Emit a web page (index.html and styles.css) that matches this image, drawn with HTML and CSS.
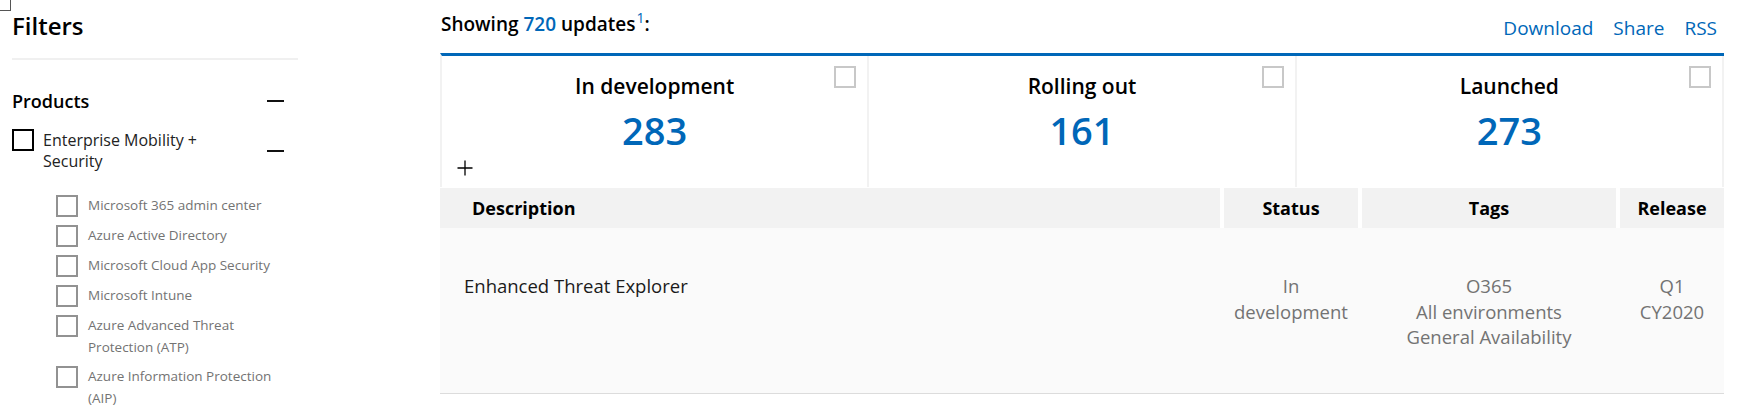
FILE: index.html
```html
<!DOCTYPE html>
<html lang="en">
<head>
<meta charset="utf-8">
<title>Roadmap</title>
<link rel="stylesheet" href="styles.css">
</head>
<body>
<span class="broken-img" aria-hidden="true"></span>
<div class="page">
  <aside class="filters">
    <h1 class="filters-title">Filters</h1>
    <section class="section">
      <div class="section-head">
        <span class="section-label">Products</span>
        <span class="minus"></span>
      </div>
      <div class="group-head">
        <span class="cb cb-big"></span>
        <span class="group-label">Enterprise Mobility +<br>Security</span>
        <span class="minus"></span>
      </div>
      <ul class="items">
        <li class="item"><span class="cb"></span><span class="item-label">Microsoft 365 admin center</span></li>
        <li class="item"><span class="cb"></span><span class="item-label">Azure Active Directory</span></li>
        <li class="item"><span class="cb"></span><span class="item-label">Microsoft Cloud App Security</span></li>
        <li class="item"><span class="cb"></span><span class="item-label">Microsoft Intune</span></li>
        <li class="item"><span class="cb"></span><span class="item-label">Azure Advanced Threat<br>Protection (ATP)</span></li>
        <li class="item"><span class="cb"></span><span class="item-label">Azure Information Protection<br>(AIP)</span></li>
      </ul>
    </section>
  </aside>

  <main class="main">
    <div class="topbar">
      <div class="showing">Showing <span class="blue">720</span> updates<sup class="sup">1</sup>:</div>
      <nav class="links">
        <a class="link" href="#">Download</a>
        <a class="link" href="#">Share</a>
        <a class="link" href="#">RSS</a>
      </nav>
    </div>

    <div class="cards">
      <div class="card">
        <div class="card-title">In development</div>
        <div class="card-num">283</div>
        <span class="card-cb"></span>
        <svg class="plus" width="16" height="16" viewBox="0 0 16 16" aria-hidden="true"><path d="M8 0.5V15.5M0.5 8H15.5" stroke="#000" stroke-width="1.3" fill="none"/></svg>
      </div>
      <div class="card">
        <div class="card-title">Rolling out</div>
        <div class="card-num">161</div>
        <span class="card-cb"></span>
      </div>
      <div class="card">
        <div class="card-title">Launched</div>
        <div class="card-num">273</div>
        <span class="card-cb"></span>
      </div>
    </div>

    <div class="table">
      <div class="thead">
        <div class="th th-desc">Description</div>
        <div class="th">Status</div>
        <div class="th">Tags</div>
        <div class="th">Release</div>
      </div>
      <div class="trow">
        <div class="td td-desc">Enhanced Threat Explorer</div>
        <div class="td">In<br>development</div>
        <div class="td">
          <div>O365</div>
          <div>All environments</div>
          <div>General Availability</div>
        </div>
        <div class="td">Q1<br>CY2020</div>
      </div>
    </div>
  </main>
</div>
</body>
</html>
```

FILE: styles.css
```css
* { box-sizing: border-box; }

body {
  margin: 0;
  background: #fff;
  color: #000;
  font-family: "Segoe UI", "Open Sans", "Noto Sans", sans-serif;
}

.broken-img {
  position: absolute;
  top: 0;
  left: 0;
  width: 11px;
  height: 11px;
  border-right: 1px solid #555;
  border-bottom: 1px solid #555;
}

.page {
  display: flex;
  padding-left: 12px;
}

/* ---------- Filters sidebar ---------- */
.filters {
  width: 286px;
  flex: none;
}

.filters-title {
  margin: 0;
  padding-top: 10px;
  font-size: 24px;
  line-height: 32px;
  font-weight: 600;
  padding-bottom: 16px;
  border-bottom: 2px solid #f0f0f0;
}

.section {
  padding-top: 29px;
}

.section-head {
  display: flex;
  align-items: center;
  justify-content: space-between;
  height: 24px;
  padding-right: 14px;
}

.section-label {
  font-size: 18px;
  line-height: 24px;
  font-weight: 600;
}

.minus {
  width: 17px;
  height: 2px;
  background: #111;
}

.group-head {
  display: flex;
  align-items: center;
  margin-top: 16px;
  padding-right: 14px;
}

.group-label {
  flex: 1;
  margin-left: 9px;
  font-size: 16px;
  line-height: 21px;
  color: #222;
  align-self: flex-start;
  padding-top: 1px;
}

.cb {
  display: block;
  flex: none;
  width: 22px;
  height: 22px;
  border: 2px solid #929292;
  background: #fff;
}

.cb-big {
  border-color: #000;
  align-self: flex-start;
}

.items {
  list-style: none;
  margin: 23px 0 0;
  padding: 0 0 0 44px;
}

.item {
  display: flex;
  align-items: flex-start;
  gap: 10px;
  margin-bottom: 8px;
}

.item-label {
  font-size: 13.5px;
  line-height: 21.5px;
  color: #737373;
}

/* ---------- Main ---------- */
.main {
  width: 1284px;
  margin-left: 142px;
  flex: none;
}

.topbar {
  display: flex;
  justify-content: space-between;
  align-items: flex-start;
  height: 53px;
  padding-top: 10px;
  padding-right: 7px;
}

.showing {
  font-size: 19px;
  line-height: 28px;
  font-weight: 600;
  padding-left: 1px;
}

.blue { color: #0067b8; }

.sup {
  color: #0067b8;
  font-size: 14px;
  font-weight: 400;
  vertical-align: 8px;
  line-height: 0;
  margin-left: 1px;
}

.links {
  display: flex;
  gap: 20px;
  margin-top: 4px;
}

.link {
  color: #0067b8;
  text-decoration: none;
  font-size: 19px;
  line-height: 28px;
  font-weight: 400;
}

.cards {
  display: grid;
  grid-template-columns: repeat(3, 1fr);
  height: 134px;
  border-top: 3px solid #0067b8;
  border-left: 2px solid #f2f2f2;
}

.card {
  position: relative;
  border-right: 2px solid #f2f2f2;
  padding-top: 16px;
  text-align: center;
}

.card-title {
  font-size: 21px;
  line-height: 28px;
  font-weight: 600;
}

.card-num {
  margin-top: 6px;
  font-size: 38px;
  line-height: 48px;
  font-weight: 600;
  color: #0067b8;
}

.card-cb {
  position: absolute;
  top: 10px;
  right: 11px;
  width: 22px;
  height: 22px;
  border: 2px solid #c8c8c8;
}

.plus {
  position: absolute;
  left: 15px;
  bottom: 11px;
}

/* ---------- Table ---------- */
.thead,
.trow {
  display: grid;
  grid-template-columns: 780px 134px 254px 104px;
  column-gap: 4px;
}

.thead {
  margin-top: 1px;
  height: 40px;
}

.th {
  background: #f2f2f2;
  font-size: 18px;
  line-height: 40px;
  font-weight: 700;
  text-align: center;
}

.th-desc {
  text-align: left;
  padding-left: 32px;
}

.trow {
  background: #fafafa;
  height: 166px;
  border-bottom: 1px solid #dcdcdc;
  padding-top: 45px;
}

.td {
  font-size: 18.5px;
  line-height: 25.5px;
  color: #737373;
  text-align: center;
}

.td-desc {
  text-align: left;
  padding-left: 24px;
  color: #1a1a1a;
}
```
